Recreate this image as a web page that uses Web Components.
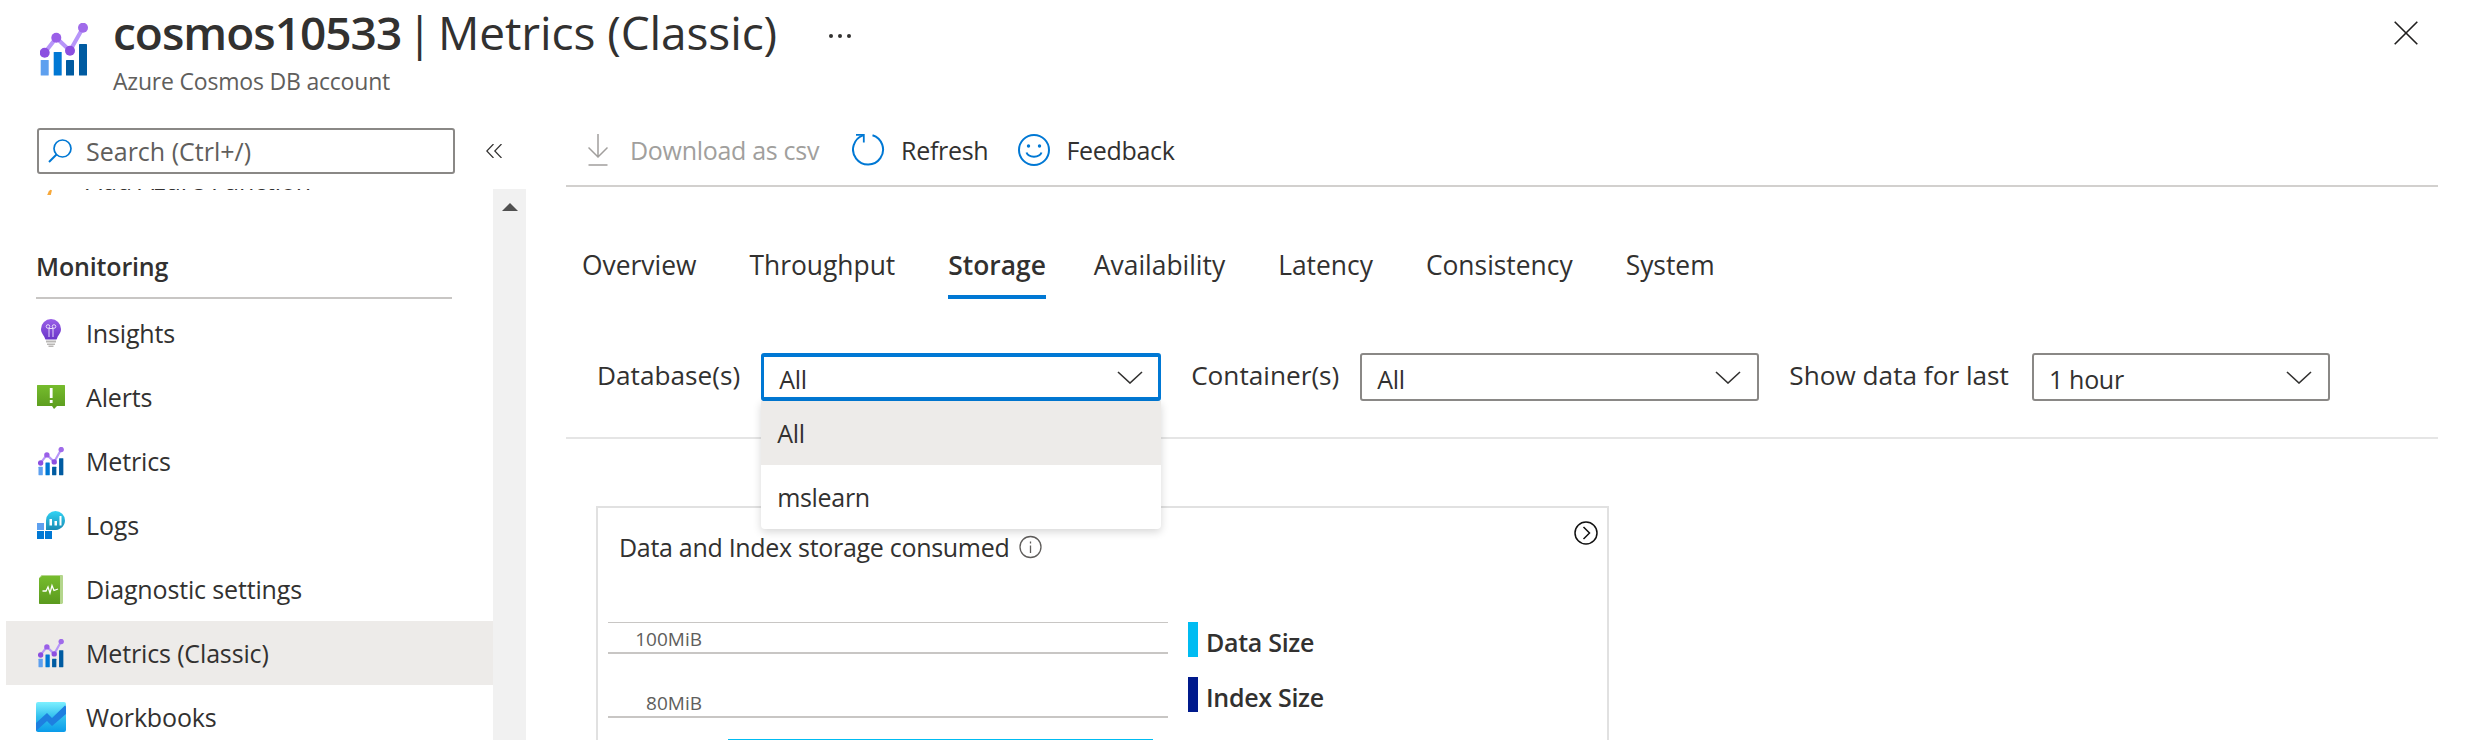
<!DOCTYPE html>
<html>
<head>
<meta charset="utf-8">
<title>Metrics (Classic)</title>
<style>
  html, body { margin: 0; height: 100%; background: #fff; overflow: hidden; }
  body { font-family: "Open Sans", "Noto Sans", sans-serif; font-size: 25px; color: #323130; }
</style>
</head>
<body>
<azure-blade></azure-blade>
<script>
const METRICS_ICON = (w, h) => /* html */`
  <svg width="${w}" height="${h}" viewBox="0 0 48 54">
    <polyline points="4.7,29.7 16.3,14.7 30,27.7 43,4.7" fill="none" stroke="#b796f9" stroke-width="4"/>
    <rect x=".7" y="37" width="8" height="15.5" rx=".6" fill="#5ea0ef"/>
    <rect x="13.7" y="29" width="8" height="23.5" rx=".6" fill="#0078d4"/>
    <rect x="26" y="37" width="8" height="15.5" rx=".6" fill="#005ba1"/>
    <rect x="39" y="21" width="8" height="31.5" rx=".6" fill="#005ba1"/>
    <circle cx="4.7" cy="29.7" r="5" fill="#8c4fe0"/>
    <circle cx="16.3" cy="14.7" r="5" fill="#9a5fe8"/>
    <circle cx="30" cy="27.7" r="5" fill="#8c4fe0"/>
    <circle cx="43" cy="4.7" r="5" fill="#a06bea"/>
  </svg>`;

const ICONS = {
  metrics: METRICS_ICON(26, 29),
  insights: /* html */`
    <svg width="20" height="28" viewBox="0 0 20 28">
      <defs><linearGradient id="b" x1="0" y1="0" x2="0" y2="1"><stop offset="0" stop-color="#9a5fe8"/><stop offset="1" stop-color="#6a35c9"/></linearGradient></defs>
      <path d="M10 0a10 10 0 0 1 10 10c0 4-2.6 6-3.6 8.5-.4 1-.6 1.5-.9 2H4.500c-.3-.5-.5-1-.9-2C2.600 16 0 14 0 10A10 10 0 0 1 10 0z" fill="url(#b)"/>
      <path d="M5 21.500h10v2H5zM6 24.500h8v1.500H6zM7.500 26.500h5V28h-5z" fill="#b9b7b5"/>
      <path d="M8 9v9M12 9v9M8 9.500h4" stroke="#e6d9fa" stroke-width="1" fill="none"/>
      <circle cx="7" cy="7.500" r="1.800" fill="none" stroke="#e6d9fa"/>
      <circle cx="13" cy="7.500" r="1.800" fill="none" stroke="#e6d9fa"/>
    </svg>`,
  alerts: /* html */`
    <svg width="28" height="24" viewBox="0 0 28 24">
      <defs><linearGradient id="a" x1="0" y1="0" x2="0" y2="1"><stop offset="0" stop-color="#76bc2d"/><stop offset="1" stop-color="#5a9a1e"/></linearGradient></defs>
      <path d="M.5 0h27a.5.500 0 0 1 .5.500V20.500a.5.500 0 0 1-.5.500H20l-3 3-2-3H.5a.5.500 0 0 1-.5-.5V.5A.5.500 0 0 1 .5 0z" fill="url(#a)"/>
      <path d="M12.800 3h2.800v10h-2.800zM12.800 15h2.800v3h-2.800z" fill="#fff"/>
    </svg>`,
  logs: /* html */`
    <svg width="28" height="28" viewBox="0 0 28 28">
      <defs><linearGradient id="l" x1="0" y1="0" x2="0" y2="1"><stop offset="0" stop-color="#32d4f5"/><stop offset="1" stop-color="#198ab3"/></linearGradient></defs>
      <rect x="0" y="12" width="7" height="7" fill="#5ea0ef"/>
      <rect x="0" y="20" width="7" height="8" fill="#0078d4"/>
      <rect x="8" y="20" width="7" height="8" fill="#0078d4"/>
      <path d="M18.500 0a9.500 9.500 0 0 1 9.500 9.500c0 5-4 9-9 9.500H9V9.500A9.500 9.500 0 0 1 18.500 0z" fill="url(#l)"/>
      <path d="M12.500 8h2.500v6.500h-2.500zM17.500 10h2.500v4.500h-2.500zM22.500 5h2v9.500h-2z" fill="#fff"/>
    </svg>`,
  diagnostic: /* html */`
    <svg width="24" height="29" viewBox="0 0 24 29">
      <defs><linearGradient id="d" x1="0" y1="0" x2="0" y2="1"><stop offset="0" stop-color="#76bc2d"/><stop offset="1" stop-color="#5a9a1e"/></linearGradient></defs>
      <path d="M2.500 0H23a1 1 0 0 1 1 1v27l-1 1H1a1 1 0 0 1-1-1V3z" fill="#b4d68c"/>
      <path d="M0 3.500 3 1h18v28H1a1 1 0 0 1-1-1z" fill="url(#d)"/>
      <polyline points="3.500,16 7,16 9,12 11,18 13,10.500 15,15.500 19,14" fill="none" stroke="#fff" stroke-width="1.300"/>
    </svg>`,
  workbooks: /* html */`
    <svg width="30" height="30" viewBox="0 0 30 30">
      <defs><linearGradient id="w" x1="0" y1="0" x2="0" y2="1"><stop offset="0" stop-color="#7df0ff"/><stop offset=".5" stop-color="#32bfee"/><stop offset="1" stop-color="#0a9bea"/></linearGradient></defs>
      <rect width="30" height="30" rx="2" fill="url(#w)"/>
      <path d="M0 21 11 11l5 5L29 3.500A2 2 0 0 1 30 5v7L16 24l-5-5L0 29z" fill="#1e7fe0"/>
    </svg>`,
  flash: /* html */`
    <svg width="30" height="30" viewBox="0 0 30 30"><path d="M14 26l-6 14M15 25l-2 8" stroke="#f7a83a" stroke-width="2" fill="none"/></svg>`
};

const CHEVRON = /* html */`
  <svg width="26" height="13" viewBox="0 0 26 13"><polyline points="1,1 13,12 25,1" fill="none" stroke="#323130" stroke-width="1.600"/></svg>`;

class NavItem extends HTMLElement {
  constructor() {
    super();
    this.attachShadow({ mode: "open" });
  }

  static get styles() {
    return /* css */`
      :host {
        display: flex;
        align-items: center;
        height: 64px;
        padding-left: 30px;
        flex: none;
        white-space: nowrap;
        line-height: 24px;
      }

      :host([selected]) {
        background: #edebe9;
      }

      .icon {
        width: 30px;
        margin-right: 20px;
        display: flex;
        justify-content: center;
      }

      svg {
        display: block;
      }
    `;
  }

  connectedCallback() {
    this.shadowRoot.innerHTML = /* html */`
      <style>${NavItem.styles}</style>
      <span class="icon">${ICONS[this.getAttribute("icon")]}</span>
      <slot></slot>
    `;
  }
}

class SideNav extends HTMLElement {
  constructor() {
    super();
    this.attachShadow({ mode: "open" });
  }

  static get styles() {
    return /* css */`
      :host {
        display: flex;
        flex-direction: column;
        width: 526px;
        flex: none;
        letter-spacing: -.15px;
      }

      .search-row {
        display: flex;
        align-items: center;
        margin-top: 18px;
        padding-left: 37px;
      }

      .search {
        box-sizing: border-box;
        width: 418px;
        height: 46px;
        border: 2px solid #8a8886;
        border-radius: 3px;
        display: flex;
        align-items: center;
        padding-left: 9px;
        color: #605e5c;
        line-height: 24px;
        letter-spacing: 0;
      }

      .search svg {
        margin-right: 14px;
      }

      .collapse {
        margin-left: 31px;
        display: block;
      }

      .scroll {
        display: flex;
        margin-top: 15px;
        height: 551px;
        overflow: hidden;
      }

      .list {
        width: 487px;
        margin-left: 6px;
        display: flex;
        flex-direction: column;
        margin-top: -41px;
      }

      .bar {
        width: 33px;
        background: #f1f1f1;
        display: flex;
        justify-content: center;
        padding-top: 14px;
        box-sizing: border-box;
      }

      .bar i {
        width: 0;
        height: 0;
        border: 8px solid transparent;
        border-top: 0;
        border-bottom-color: #505050;
      }
    `;
  }

  connectedCallback() {
    this.shadowRoot.innerHTML = /* html */`
      <style>${SideNav.styles}</style>
      <div class="search-row">
        <div class="search">
          <svg width="24" height="24" viewBox="0 0 24 24"><circle cx="14.500" cy="9.500" r="8.500" fill="none" stroke="#0078d4" stroke-width="1.700"/><path d="M8.500 15.500 1 23" stroke="#0078d4" stroke-width="2" fill="none"/></svg>
          <span>Search (Ctrl+/)</span>
        </div>
        <svg class="collapse" width="16" height="14" viewBox="0 0 16 14"><path d="M7.500 0 .8 7l6.700 7M15.500 0 8.800 7l6.700 7" fill="none" stroke="#323130" stroke-width="1.200"/></svg>
      </div>
      <div class="scroll">
        <div class="list"><slot></slot></div>
        <div class="bar"><i></i></div>
      </div>
    `;
  }
}

class NavHeading extends HTMLElement {
  constructor() {
    super();
    this.attachShadow({ mode: "open" });
  }

  connectedCallback() {
    this.shadowRoot.innerHTML = /* html */`
      <style>
        :host {
          display: block;
          flex: none;
          height: 87px;
          margin: 0 41px 2px 30px;
          box-sizing: border-box;
          border-bottom: 2px solid #c8c6c4;
          padding-top: 36px;
          line-height: 36px;
          font-weight: 600;
        }
      </style>
      <slot></slot>
    `;
  }
}

class CommandBar extends HTMLElement {
  constructor() {
    super();
    this.attachShadow({ mode: "open" });
  }

  connectedCallback() {
    this.shadowRoot.innerHTML = /* html */`
      <style>
        :host {
          display: flex;
          align-items: center;
          box-sizing: border-box;
          height: 77px;
          padding: 5px 0 0 22px;
          border-bottom: 2px solid #d2d0ce;
          letter-spacing: -.3px;
        }

        span { white-space: nowrap; }
        .off { color: #a19f9d; margin: 0 33px 0 22px; }
        .on { margin: 0 30px 0 16px; }
        svg { display: block; flex: none; }
      </style>
      <svg width="20" height="32" viewBox="0 0 20 32"><path d="M10 0v23M.5 13.500 10 23l9.500-9.500M.5 31h19" fill="none" stroke="#a19f9d" stroke-width="1.500"/></svg>
      <span class="off">Download as csv</span>
      <svg width="33" height="32" viewBox="0 0 33 32"><path d="M11 1.400A15 15 0 1 0 20.500 1.200" fill="none" stroke="#0078d4" stroke-width="2"/><path d="M4 .9h7.800v7.500" fill="none" stroke="#0078d4" stroke-width="1.800"/></svg>
      <span class="on">Refresh</span>
      <svg width="32" height="32" viewBox="0 0 32 32"><circle cx="16" cy="16" r="15" fill="none" stroke="#0078d4" stroke-width="2"/><circle cx="10.500" cy="12" r="1.700" fill="#0078d4"/><circle cx="21.500" cy="12" r="1.700" fill="#0078d4"/><path d="M8.500 18.500c2 5.500 13 5.500 15 0" fill="none" stroke="#0078d4" stroke-width="2"/></svg>
      <span class="on">Feedback</span>
    `;
  }
}

class TabStrip extends HTMLElement {
  constructor() {
    super();
    this.attachShadow({ mode: "open" });
  }

  connectedCallback() {
    const tabs = ["Overview", "Throughput", "Storage", "Availability", "Latency", "Consistency", "System"];
    this.shadowRoot.innerHTML = /* html */`
      <style>
        :host {
          display: flex;
          gap: 53px;
          padding: 60px 0 0 16px;
          line-height: 36px;
          font-size: 26.4px;
        }

        div {
          padding-bottom: 12px;
          border-bottom: 4px solid transparent;
        }

        .active {
          font-weight: 600;
          border-bottom-color: #0078d4;
          margin-right: -5px;
        }
      </style>
      ${tabs.map(tab => /* html */`<div class="${tab === "Storage" ? "active" : ""}">${tab}</div>`).join("")}
    `;
  }
}

class SelectBox extends HTMLElement {
  constructor() {
    super();
    this.attachShadow({ mode: "open" });
  }

  static get styles() {
    return /* css */`
      :host {
        display: block;
        position: relative;
        flex: none;
        font-size: 25px;
        letter-spacing: -.3px;
      }

      .box {
        box-sizing: border-box;
        height: 48px;
        border: 2px solid #8a8886;
        border-radius: 3px;
        display: flex;
        align-items: center;
        justify-content: space-between;
        padding: 3px 16px 0 15px;
      }

      :host([open]) .box {
        border-style: solid;
        border-color: #0078d4;
        border-width: 4px 3px;
        padding: 3px 15px 0 15px;
      }

      .box svg {
        margin-top: -3px;
      }

      .menu {
        display: none;
        position: absolute;
        z-index: 5;
        top: 48px;
        left: 0;
        right: 0;
        background: #fff;
        border-radius: 0 0 4px 4px;
        box-shadow: 0 3px 8px rgba(0, 0, 0, .16);
      }

      :host([open]) .menu {
        display: block;
      }
    `;
  }

  connectedCallback() {
    this.style.width = `${this.getAttribute("size")}px`;
    this.shadowRoot.innerHTML = /* html */`
      <style>${SelectBox.styles}</style>
      <div class="box"><span>${this.getAttribute("value")}</span>${CHEVRON}</div>
      <div class="menu"><slot></slot></div>
    `;
  }
}

class SelectOption extends HTMLElement {
  constructor() {
    super();
    this.attachShadow({ mode: "open" });
  }

  connectedCallback() {
    this.shadowRoot.innerHTML = /* html */`
      <style>
        :host {
          display: flex;
          align-items: center;
          height: 64px;
          padding-left: 16px;
        }

        :host([selected]) {
          background: #edebe9;
        }
      </style>
      <slot></slot>
    `;
  }
}

class FilterBar extends HTMLElement {
  constructor() {
    super();
    this.attachShadow({ mode: "open" });
  }

  connectedCallback() {
    this.shadowRoot.innerHTML = /* html */`
      <style>
        :host {
          display: flex;
          align-items: center;
          margin-top: 54px;
          padding: 0 0 36px 31px;
          border-bottom: 2px solid #e5e5e5;
          font-size: 26.2px;
        }

        ::slotted(span) {
          margin-right: 21px;
          margin-top: -4px;
          white-space: nowrap;
        }

        ::slotted(select-box) {
          margin-right: 30px;
        }
      </style>
      <slot></slot>
    `;
  }
}

class LegendItem extends HTMLElement {
  constructor() {
    super();
    this.attachShadow({ mode: "open" });
  }

  connectedCallback() {
    this.shadowRoot.innerHTML = /* html */`
      <style>
        :host {
          display: flex;
          align-items: center;
          height: 35px;
          font-weight: 600;
          letter-spacing: -.3px;
          white-space: nowrap;
        }

        i {
          width: 10px;
          height: 35px;
          margin-right: 8px;
          background: ${this.getAttribute("color")};
        }

        span { margin-top: 4px; }
      </style>
      <i></i><span><slot></slot></span>
    `;
  }
}

class MetricCard extends HTMLElement {
  constructor() {
    super();
    this.attachShadow({ mode: "open" });
  }

  static get styles() {
    return /* css */`
      :host {
        display: block;
        box-sizing: border-box;
        width: 1013px;
        height: 400px;
        margin: 67px 0 0 30px;
        border: 2px solid #e1e1e1;
      }

      .head {
        display: flex;
        justify-content: space-between;
        padding: 13px 9px 0 21px;
        height: 44px;
      }

      .title {
        display: flex;
        align-items: center;
        gap: 10px;
        height: 36px;
        margin-top: 8px;
        letter-spacing: -.3px;
      }

      .body {
        display: flex;
        margin: 57px 0 0 10px;
      }

      .plot {
        width: 560px;
        font-size: 19px;
        color: #605e5c;
        flex: none;
      }

      .band {
        box-sizing: border-box;
        display: flex;
        align-items: flex-end;
        justify-content: flex-end;
        width: 100%;
        height: 64px;
        padding-right: 466px;
        line-height: 26px;
        border-bottom: 2px solid #c8c6c4;
      }

      .band.top {
        height: 32px;
        border-top: 1px solid #c8c6c4;
      }

      .series {
        height: 2px;
        width: 425px;
        margin: 21px 0 0 120px;
        background: #00bcf2;
      }

      .legend {
        display: flex;
        flex-direction: column;
        gap: 20px;
        margin-left: 20px;
      }

      svg {
        display: block;
        flex: none;
      }
    `;
  }

  connectedCallback() {
    this.shadowRoot.innerHTML = /* html */`
      <style>${MetricCard.styles}</style>
      <div class="head">
        <div class="title">
          <span>Data and Index storage consumed</span>
          <svg width="23" height="24" viewBox="0 0 23 24"><circle cx="11.500" cy="12" r="10.500" fill="none" stroke="#605e5c" stroke-width="1.300"/><path d="M11.500 10.500V18M11.500 6.500v2" stroke="#605e5c" stroke-width="1.300" fill="none"/></svg>
        </div>
        <svg width="24" height="24" viewBox="0 0 24 24"><circle cx="12" cy="12" r="11" fill="none" stroke="#111" stroke-width="1.500"/><path d="M9.500 6l6 6-6 6" fill="none" stroke="#111" stroke-width="1.500"/></svg>
      </div>
      <div class="body">
        <div class="plot">
          <div class="band top">100MiB</div>
          <div class="band">80MiB</div>
          <div class="series"></div>
        </div>
        <div class="legend">
          <legend-item color="#00bcf2">Data Size</legend-item>
          <legend-item color="#001a8c">Index Size</legend-item>
        </div>
      </div>
    `;
  }
}

class BladeHeader extends HTMLElement {
  constructor() {
    super();
    this.attachShadow({ mode: "open" });
  }

  static get styles() {
    return /* css */`
      :host {
        display: flex;
        height: 110px;
        box-sizing: border-box;
        padding: 23px 52px 0 40px;
      }

      .logo {
        margin-right: 25px;
      }

      .titles {
        margin-top: -23px;
      }

      h1 {
        margin: 0;
        font-size: 46px;
        line-height: 64px;
        font-weight: 400;
        letter-spacing: -.1px;
        word-spacing: -6px;
        white-space: nowrap;
      }

      h1 b {
        font-weight: 600;
        letter-spacing: -1px;
      }

      h1 span {
        word-spacing: 0;
      }

      .sub {
        line-height: 34px;
        font-size: 23px;
        color: #605e5c;
        letter-spacing: -.2px;
      }

      .more {
        display: flex;
        gap: 5px;
        margin: 11px 0 0 52px;
      }

      .more i {
        width: 4px;
        height: 4px;
        border-radius: 50%;
        background: #323130;
      }

      .close {
        margin: -2px 0 0 auto;
      }

      svg {
        display: block;
        flex: none;
      }
    `;
  }

  connectedCallback() {
    this.shadowRoot.innerHTML = /* html */`
      <style>${BladeHeader.styles}</style>
      <div class="logo">${METRICS_ICON(48, 54)}</div>
      <div class="titles">
        <h1><b>cosmos10533</b> | <span>Metrics (Classic)</span></h1>
        <div class="sub">Azure Cosmos DB account</div>
      </div>
      <div class="more"><i></i><i></i><i></i></div>
      <svg class="close" width="24" height="24" viewBox="0 0 24 24"><path d="M.7.7l22.600 22.600M23.300.7.7 23.300" stroke="#201f1e" stroke-width="1.600" fill="none"/></svg>
    `;
  }
}

class MetricsPane extends HTMLElement {
  constructor() {
    super();
    this.attachShadow({ mode: "open" });
  }

  connectedCallback() {
    this.shadowRoot.innerHTML = /* html */`
      <style>
        :host {
          display: block;
          flex: 1;
          min-width: 0;
          padding: 0 32px 0 40px;
        }
      </style>
      <command-bar></command-bar>
      <tab-strip></tab-strip>
      <filter-bar>
        <span>Database(s)</span>
        <select-box size="400" value="All" open>
          <select-option selected>All</select-option>
          <select-option>mslearn</select-option>
        </select-box>
        <span>Container(s)</span>
        <select-box size="399" value="All"></select-box>
        <span style="margin-right: 23px">Show data for last</span>
        <select-box size="298" value="1 hour"></select-box>
      </filter-bar>
      <metric-card></metric-card>
    `;
  }
}

class AzureBlade extends HTMLElement {
  constructor() {
    super();
    this.attachShadow({ mode: "open" });
  }

  connectedCallback() {
    this.shadowRoot.innerHTML = /* html */`
      <style>
        :host {
          display: flex;
          flex-direction: column;
          width: 2470px;
          height: 740px;
          overflow: hidden;
        }

        main {
          display: flex;
          flex: 1;
          min-height: 0;
        }
      </style>
      <blade-header></blade-header>
      <main>
        <side-nav>
          <nav-item icon="flash">Add Azure Function</nav-item>
          <nav-heading>Monitoring</nav-heading>
          <nav-item icon="insights">Insights</nav-item>
          <nav-item icon="alerts">Alerts</nav-item>
          <nav-item icon="metrics">Metrics</nav-item>
          <nav-item icon="logs">Logs</nav-item>
          <nav-item icon="diagnostic">Diagnostic settings</nav-item>
          <nav-item icon="metrics" selected>Metrics (Classic)</nav-item>
          <nav-item icon="workbooks">Workbooks</nav-item>
        </side-nav>
        <metrics-pane></metrics-pane>
      </main>
    `;
  }
}

customElements.define("nav-item", NavItem);
customElements.define("nav-heading", NavHeading);
customElements.define("side-nav", SideNav);
customElements.define("command-bar", CommandBar);
customElements.define("tab-strip", TabStrip);
customElements.define("select-option", SelectOption);
customElements.define("select-box", SelectBox);
customElements.define("filter-bar", FilterBar);
customElements.define("legend-item", LegendItem);
customElements.define("metric-card", MetricCard);
customElements.define("blade-header", BladeHeader);
customElements.define("metrics-pane", MetricsPane);
customElements.define("azure-blade", AzureBlade);
</script>
</body>
</html>
